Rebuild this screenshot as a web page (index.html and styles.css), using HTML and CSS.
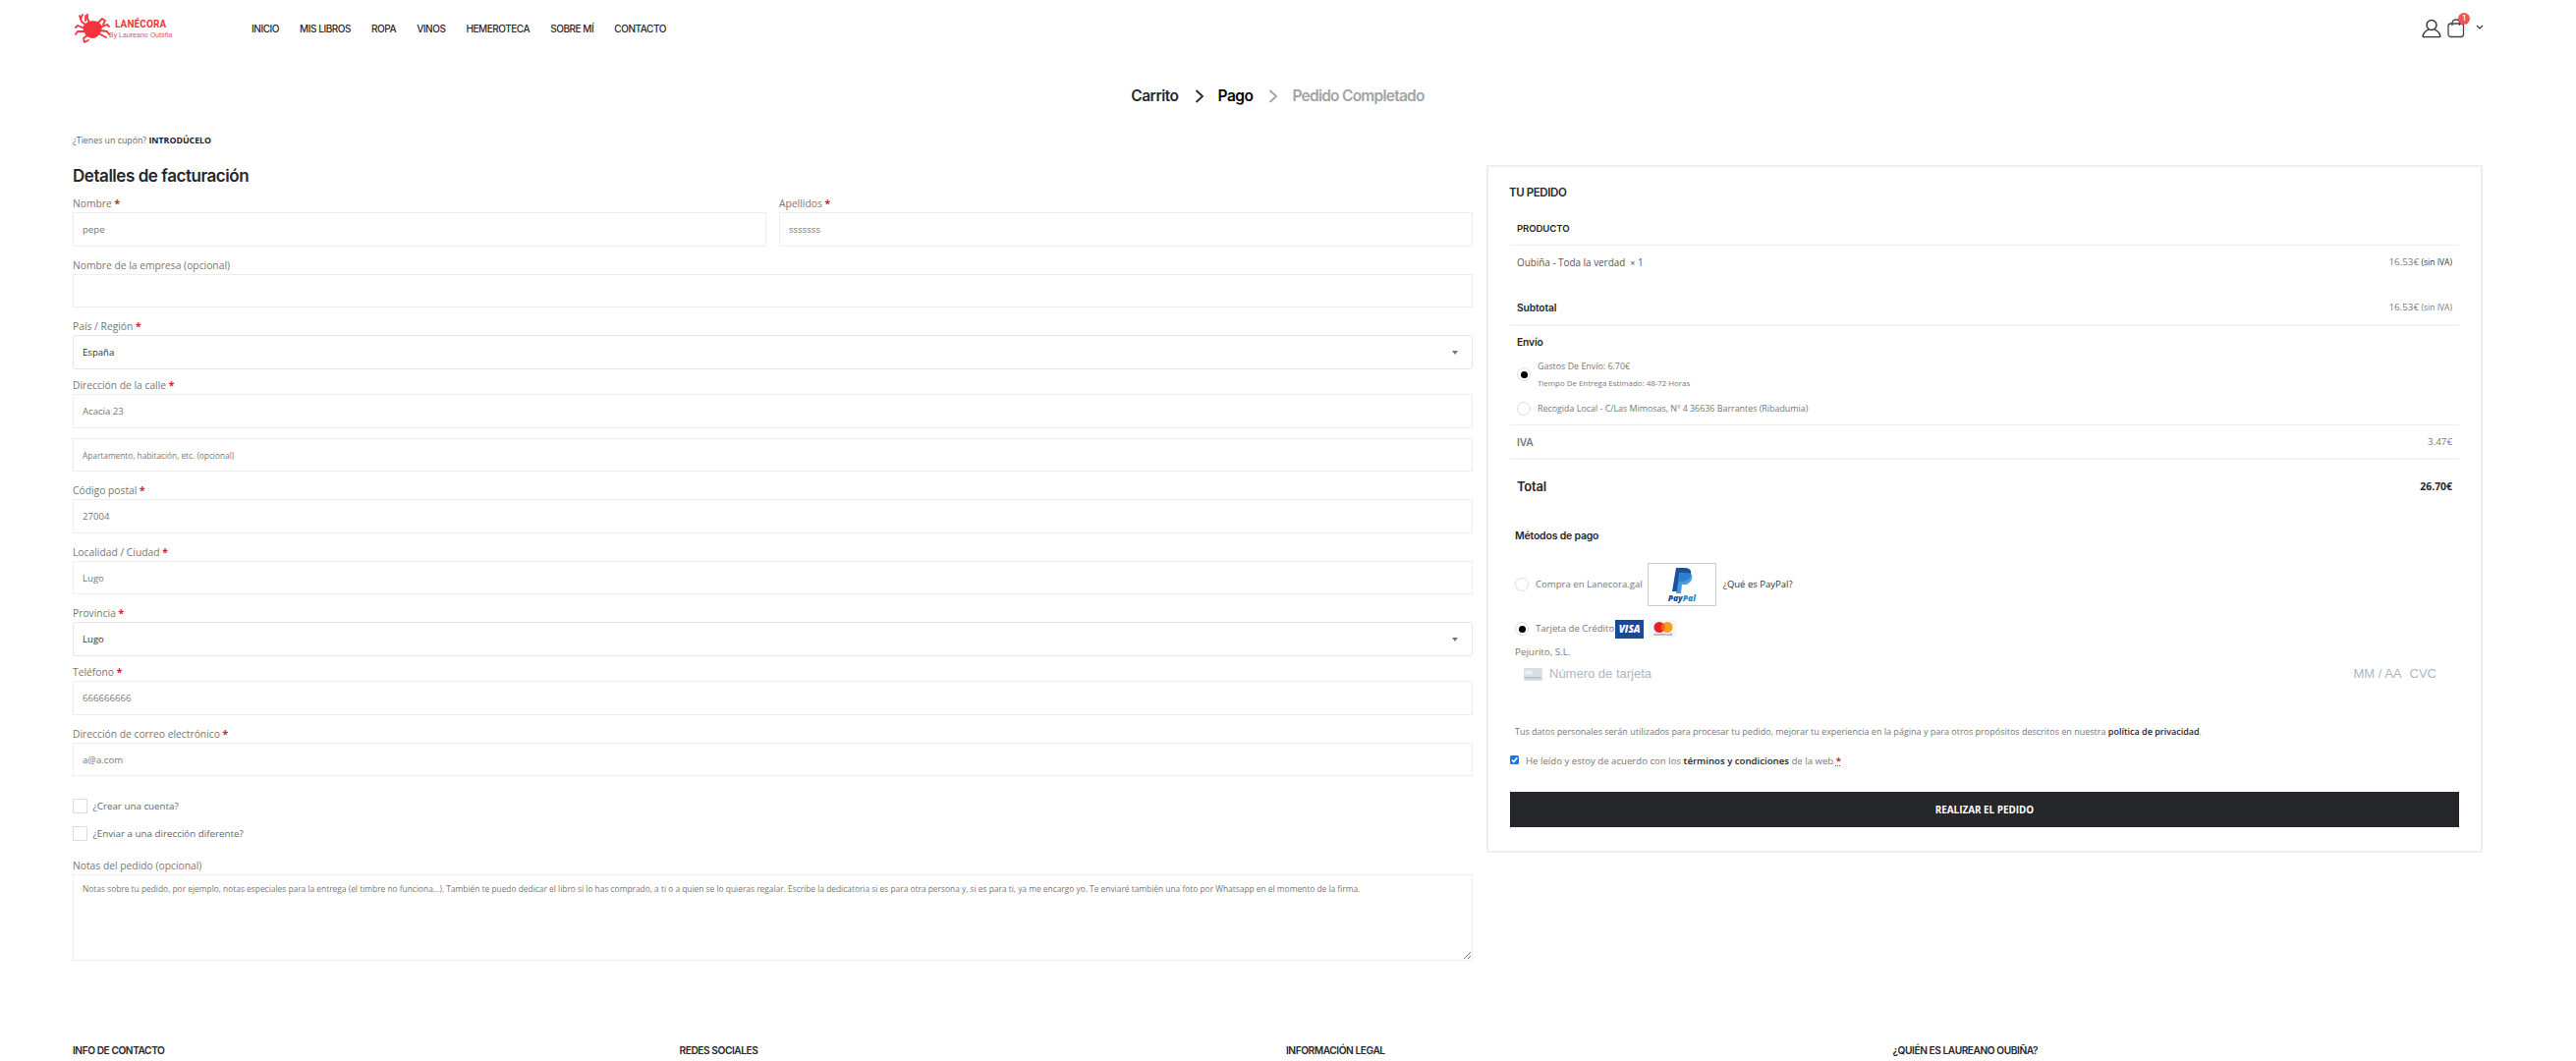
FILE: index.html
```html
<!DOCTYPE html>
<html lang="es">
<head>
<meta charset="utf-8">
<title>Finalizar compra - Lanécora</title>
<link rel="stylesheet" href="styles.css">
</head>
<body>
<div class="page">
  <header class="header">
    <a class="logo">
      <svg class="crab" width="36" height="30" viewBox="0 0 36 30" aria-hidden="true">
        <g fill="none" stroke="#f5333f" stroke-width="1.8" stroke-linecap="round" stroke-linejoin="round">
          <path d="M11 11 L7 8 L5 2"/><path d="M15 9 L13 5 L13 0"/>
          <path d="M8 1 L6 5"/><path d="M11 2 L11 7"/>
          <path d="M23 10 L28 5 L31 7 L29 11"/>
          <path d="M10 15 L3 12 L1 14"/><path d="M10 18 L3 18 L1 21"/>
          <path d="M26 14 L33 11 L35 13"/><path d="M26 17 L33 18 L35 21"/>
          <path d="M24 20 L30 23 L32 24"/>
          <path d="M13 22 L9 25 L10 29 L14 27"/>
        </g>
        <path d="M8.500 13 C12 6 24 5 27.500 12 C28.500 18 24 25 18 25 C13 25 8.500 20 8.500 13 Z" fill="#f5333f"/>
      </svg>
      <span class="logo-text"><span class="logo-name">LANÉCORA</span><span class="logo-sub">By Laureano Oubiña</span></span>
    </a>
    <nav class="nav">
      <a>INICIO</a><a>MIS LIBROS</a><a>ROPA</a><a>VINOS</a><a>HEMEROTECA</a><a>SOBRE MÍ</a><a>CONTACTO</a>
    </nav>
    <div class="tools">
      <svg width="20" height="20" viewBox="0 0 20 20" aria-hidden="true" fill="none" stroke="#333" stroke-width="1.4">
        <circle cx="10" cy="6.500" r="5"/><path d="M1 18.600 C1.600 14.500 4.500 12 7 11.200 M19 18.600 C18.400 14.500 15.500 12 13 11.200 M1 18.600 H19"/>
      </svg>
      <span class="bag">
        <svg width="18" height="20" viewBox="0 0 18 20" aria-hidden="true" fill="none" stroke="#444" stroke-width="1.3">
          <rect x="1" y="5" width="15.500" height="13.500" rx="2.500"/><path d="M5 7 V4.500 C5 2 7 1 9 1 C11 1 12.500 2 12.500 4.500 V7"/>
        </svg>
        <span class="badge">1</span>
      </span>
      <svg class="caret" width="8" height="6" viewBox="0 0 8 6" aria-hidden="true" fill="none" stroke="#333" stroke-width="1.2"><path d="M1 1 L4 4 L7 1"/></svg>
    </div>
  </header>

  <div class="steps">
    <span class="step">Carrito</span>
    <svg class="step-arrow" width="10" height="14" viewBox="0 0 10 14" aria-hidden="true" fill="none" stroke="#26272b" stroke-width="1.8"><path d="M1.500 1 L8 7 L1.500 13"/></svg>
    <span class="step step-now">Pago</span>
    <svg class="step-arrow" width="10" height="14" viewBox="0 0 10 14" aria-hidden="true" fill="none" stroke="#a3a3a3" stroke-width="1.8"><path d="M1.500 1 L8 7 L1.500 13"/></svg>
    <span class="step step-off">Pedido Completado</span>
  </div>

  <p class="coupon">¿Tienes un cupón? <b>INTRODÚCELO</b></p>

  <main class="checkout">
    <section class="billing">
      <h2 class="billing-title">Detalles de facturación</h2>
      <div class="two">
        <div class="field"><label class="label">Nombre <i>*</i></label><div class="input">pepe</div></div>
        <div class="field"><label class="label">Apellidos <i>*</i></label><div class="input">sssssss</div></div>
      </div>
      <div class="field"><label class="label">Nombre de la empresa (opcional)</label><div class="input"></div></div>
      <div class="field field-sel"><label class="label">País / Región <i>*</i></label><div class="input select">España</div></div>
      <div class="field"><label class="label">Dirección de la calle <i>*</i></label><div class="input">Acacia 23</div></div>
      <div class="field"><div class="input input-ph">Apartamento, habitación, etc. (opcional)</div></div>
      <div class="field"><label class="label">Código postal <i>*</i></label><div class="input">27004</div></div>
      <div class="field"><label class="label">Localidad / Ciudad <i>*</i></label><div class="input">Lugo</div></div>
      <div class="field field-sel"><label class="label">Provincia <i>*</i></label><div class="input select">Lugo</div></div>
      <div class="field"><label class="label">Teléfono <i>*</i></label><div class="input">666666666</div></div>
      <div class="field"><label class="label">Dirección de correo electrónico <i>*</i></label><div class="input">a@a.com</div></div>
      <div class="check-row check-first"><span class="box"></span>¿Crear una cuenta?</div>
      <div class="check-row"><span class="box"></span>¿Enviar a una dirección diferente?</div>
      <label class="label notes-label">Notas del pedido (opcional)</label>
      <div class="textarea">Notas sobre tu pedido, por ejemplo, notas especiales para la entrega (el timbre no funciona...). También te puedo dedicar el libro si lo has comprado, a ti o a quien se lo quieras regalar. Escribe la dedicatoria si es para otra persona y, si es para ti, ya me encargo yo. Te enviaré también una foto por Whatsapp en el momento de la firma.
        <svg class="grip" width="8" height="8" viewBox="0 0 8 8" aria-hidden="true" stroke="#777" stroke-width="1"><path d="M1 8 L8 1 M5 8 L8 5"/></svg>
      </div>
    </section>

    <aside class="order">
      <h3 class="order-title">TU PEDIDO</h3>
      <div class="row row-head">PRODUCTO</div>
      <div class="row row-item">
        <span class="item-name">Oubiña - Toda la verdad &nbsp;<small>×</small> 1</span>
        <span class="price">16.53€ <small class="tax tax-dark">(sin IVA)</small></span>
      </div>
      <div class="row row-sub">
        <b class="strong">Subtotal</b>
        <span class="price">16.53€ <small class="tax">(sin IVA)</small></span>
      </div>
      <div class="ship">
        <b class="strong">Envío</b>
        <div class="ship-opt ship-opt-1">
          <span class="radio radio-on"></span>
          <div><div class="ship-name">Gastos De Envío: 6.70€</div><div class="ship-note">Tiempo De Entrega Estimado: 48-72 Horas</div></div>
        </div>
        <div class="ship-opt ship-opt-2">
          <span class="radio"></span>
          <div class="ship-name">Recogida Local - C/Las Mimosas, Nº 4 36636 Barrantes (Ribadumia)</div>
        </div>
      </div>
      <div class="row row-tax"><b class="strong strong-grey">IVA</b><span class="price">3.47€</span></div>
      <div class="row row-total"><b class="total-label">Total</b><b class="total-value">26.70€</b></div>

      <div class="pay">
        <h4 class="pay-title">Métodos de pago</h4>
        <div class="pay-opt pay-opt-1">
          <span class="radio"></span>
          <span class="pay-name">Compra en Lanecora.gal</span>
          <span class="pp-box">
            <svg width="22" height="26" viewBox="0 0 22 26" aria-hidden="true">
              <path d="M5 0 H14 C19 0 21 3 20 7 C19 12 15 14 11 14 H8 L6.500 24 H1 Z" fill="#1d4f9c"/>
              <path d="M8 5 H16 C21 5 22 8 21 11 C20 15 17 17 13 17 H11 L10 26 H5 Z" fill="#2a8ad6" opacity=".85"/>
            </svg>
            <span class="pp-word">Pay<em>Pal</em></span>
          </span>
          <span class="pp-link">¿Qué es PayPal?</span>
        </div>
        <div class="pay-opt pay-opt-2">
          <span class="radio radio-on"></span>
          <span class="pay-name">Tarjeta de Crédito</span>
          <span class="visa">VISA</span>
          <span class="mc">
            <svg width="20" height="11" viewBox="0 0 20 11" aria-hidden="true"><circle cx="6" cy="5.500" r="5.500" fill="#e8202a"/><circle cx="14" cy="5.500" r="5.500" fill="#f59e1f"/><path d="M10 1.300 A5.500 5.500 0 0 1 10 9.700 A5.500 5.500 0 0 1 10 1.300 Z" fill="#f4641f"/></svg>
            <span class="mc-word">mastercard</span>
          </span>
        </div>
        <div class="pay-company">Pejurito, S.L.</div>
        <div class="card-line">
          <svg width="19" height="13" viewBox="0 0 19 13" aria-hidden="true"><rect width="19" height="13" rx="1.500" fill="#d9dee5"/><rect x="1.500" y="2.500" width="7" height="4" fill="#eef1f4"/><rect x="1.500" y="9" width="16" height="1.500" fill="#b3bcc7"/></svg>
          <span class="card-num">Número de tarjeta</span>
          <span class="card-date">MM / AA</span>
          <span class="card-cvc">CVC</span>
        </div>
        <p class="privacy">Tus datos personales serán utilizados para procesar tu pedido, mejorar tu experiencia en la página y para otros propósitos descritos en nuestra <b>política de privacidad</b>.</p>
      </div>
      <div class="terms"><span class="tick"><svg width="9" height="9" viewBox="0 0 9 9" aria-hidden="true" fill="none" stroke="#fff" stroke-width="1.600"><path d="M1.800 4.500 L3.800 6.500 L7.300 2.300"/></svg></span>He leído y estoy de acuerdo con los <b>términos y condiciones</b> de la web <i>*</i></div>
      <div class="place">REALIZAR EL PEDIDO</div>
    </aside>
  </main>

  <footer class="footer">
    <h5 class="foot-title">INFO DE CONTACTO</h5>
    <h5 class="foot-title">REDES SOCIALES</h5>
    <h5 class="foot-title">INFORMACIÓN LEGAL</h5>
    <h5 class="foot-title">¿QUIÉN ES LAUREANO OUBIÑA?</h5>
  </footer>
</div>
</body>
</html>
```
FILE: styles.css
```css
* { box-sizing: border-box; }
html, body { margin: 0; padding: 0; background: #fff; }
body { font-family: "Open Sans", "Liberation Sans", sans-serif; font-size: 10px; color: #777; }
h2, h3, h4, h5, p { margin: 0; font-weight: 600; }
.page { height: 1080px; overflow: hidden; padding: 0 95px 0 74px; }

.header { height: 58px; display: flex; align-items: center; }
.logo { display: flex; align-items: center; width: 182px; height: 30px; padding-left: 2px; }
.crab { flex: none; }
.logo-text { display: flex; flex-direction: column; margin-left: -1px; }
.logo-name { font: 700 10px/11px "Roboto", sans-serif; color: #f5333f; margin-left: 6px; letter-spacing: .1px; }
.logo-sub { font: 400 7px/9px "Liberation Sans", sans-serif; color: #e2505a; margin-top: 1px; }
.nav { display: flex; gap: 21px; font: 500 10px/16px "Inter", sans-serif; color: #26272b; letter-spacing: -.45px; }
.tools { margin-left: auto; display: flex; align-items: center; margin-right: -1px; }
.bag { position: relative; display: block; height: 20px; margin-left: 6px; }
.bag svg { display: block; }
.badge { position: absolute; left: 11px; top: -6px; width: 12px; height: 12px; border-radius: 50%; background: #f0555c; color: #fff; font: 600 7px/12px "Inter", sans-serif; text-align: center; }
.caret { margin-left: 11px; margin-top: -2px; }

.steps { display: flex; justify-content: center; align-items: center; height: 24px; margin-top: 28px; font: 600 15.500px/24px "Inter", sans-serif; letter-spacing: -.5px; color: #26272b; }
.step-now { color: #000; }
.step-off { color: #a3a3a3; letter-spacing: -.75px; }
.step-arrow { margin: 0 14px 0 16px; }

.coupon { margin-top: 25px; font: 400 8.800px/16px "Open Sans", sans-serif; color: #666; }
.coupon b { color: #222; font-weight: 700; }

.checkout { margin-top: 15px; display: grid; grid-template-columns: 1425px 1014px; column-gap: 14px; align-items: start; }
.billing-title { font: 600 17px/26px "Inter", sans-serif; letter-spacing: -.45px; color: #26272b; margin-bottom: 6px; }
.two { display: grid; grid-template-columns: 706px 706px; column-gap: 13px; }
.field { margin-bottom: 10px; }
.field-sel { margin-bottom: 7.500px; }
.label { display: block; font-size: 10.300px; line-height: 18px; color: #777; }
.label i, .terms i { color: #c9252d; font-style: normal; font-weight: 700; }
.input { height: 34.500px; border: 1px solid #eee; padding: 0 9px; font-size: 9.600px; line-height: 34px; color: #777; }
.input-ph { font-size: 8.300px; }
.select { color: #333; border-color: #e6e6e6; border-radius: 3px; position: relative; }
.select::after { content: ""; position: absolute; right: 14px; top: 15px; border: 3.500px solid transparent; border-top: 4px solid #777; border-bottom: 0; }
.check-row { display: flex; align-items: center; height: 15px; font-size: 9.800px; color: #666; margin-top: 13px; }
.check-first { margin-top: 23px; }
.box { width: 15px; height: 15px; border: 1px solid #ddd; margin-right: 5.500px; flex: none; }
.notes-label { margin-top: 16px; }
.textarea { position: relative; height: 88px; border: 1px solid #eee; padding: 6px 9px; font-size: 8.400px; line-height: 16px; color: #777; }
.grip { position: absolute; right: 1px; bottom: 1px; }

.order { margin-top: 2px; border: 2px solid #eee; padding: 16px 22px 24px; }
.order-title { font: 600 11.500px/20px "Inter", sans-serif; letter-spacing: -.4px; color: #26272b; margin-bottom: 9px; margin-left: -1px; }
.row { display: flex; justify-content: space-between; padding: 0 7px; }
.row-head { height: 35px; padding-top: 1px; border-bottom: 1px solid #eee; align-items: center; font: 600 9.600px/18px "Inter", sans-serif; letter-spacing: -.1px; color: #26272b; }
.row-item { height: 46px; padding-top: 8px; line-height: 18px; }
.item-name { color: #555; font-size: 9.900px; }
.item-name small { font-size: 9px; }
.price { font-size: 9.800px; color: #777; line-height: 18px; }
.tax { font-size: 8.500px; }
.tax-dark { color: #333; }
.row-sub { height: 36px; border-bottom: 2px solid #f3f3f3; align-items: center; }
.strong { font: 600 10.300px/18px "Inter", sans-serif; color: #26272b; letter-spacing: -.15px; }
.strong-grey { color: #777; }
.ship { padding: 7px; border-bottom: 1px solid #eee; }
.ship > .strong { display: block; }
.ship-opt { display: flex; align-items: center; gap: 7px; }
.ship-opt-1 { margin-top: 7px; }
.ship-opt-2 { margin-top: 9px; }
.radio { width: 14px; height: 14px; border-radius: 50%; border: 1px solid #ddd; background: #fff; position: relative; flex: none; }
.radio-on::after { content: ""; position: absolute; left: 2.500px; top: 2.500px; width: 7px; height: 7px; background: #000; border-radius: 50%; }
.ship-name { font-size: 8.900px; line-height: 18px; color: #777; }
.ship-note { font-size: 7.900px; line-height: 16px; color: #777; }
.row-tax { height: 35px; border-bottom: 2px solid #f3f3f3; align-items: center; }
.row-total { height: 54px; align-items: center; }
.total-label { font: 600 13px/18px "Inter", sans-serif; color: #26272b; letter-spacing: -.2px; }
.total-value { font-size: 10.400px; font-weight: 700; color: #26272b; }

.pay { padding: 15px 0 0 5px; }
.pay-title { font: 600 10.500px/18px "Inter", sans-serif; color: #26272b; letter-spacing: -.2px; }
.pay-opt { display: flex; align-items: center; }
.pay-opt-1 { margin-top: 18px; height: 44px; }
.pay-opt-2 { margin-top: 13px; height: 20px; }
.pay-name { margin: 0 0 2px 7px; font-size: 9.600px; color: #777; }
.pp-box { margin-left: 5px; width: 70px; height: 44px; border: 1px solid #ccc; display: flex; flex-direction: column; align-items: center; padding-top: 4px; }
.pp-box svg { flex: none; }
.pp-word { font: italic 800 8.500px/9px "Open Sans", sans-serif; color: #1d4f9c; }
.pp-word em { color: #2a8ad6; }
.pp-link { margin: 0 0 1px 7px; font-size: 9.500px; color: #333; }
.visa { margin-left: 1px; width: 29px; height: 19px; background: #1a4a96; color: #fff; font: italic 800 10px/19px "Open Sans", sans-serif; text-align: center; }
.mc { margin-left: 5px; width: 29px; height: 18px; background: #f6f6f6; display: flex; flex-direction: column; align-items: center; padding-top: 2px; }
.mc-word { font-size: 3.500px; line-height: 4px; color: #444; }
.pay-company { margin-top: 5px; line-height: 18px; font-size: 9.800px; color: #777; }
.card-line { margin-top: 3px; height: 20px; display: flex; align-items: center; padding: 0 23px 0 9px; font: 400 13px/20px "Liberation Sans", sans-serif; color: #aab7c4; }
.card-num { margin-left: 7px; }
.card-date { margin-left: auto; }
.card-cvc { margin-left: 8px; }
.privacy { margin-top: 41px; font: 400 9px/16px "Open Sans", sans-serif; color: #777; }
.privacy b { color: #26272b; font-weight: 600; }
.terms { margin-top: 12px; display: flex; align-items: center; white-space: pre-wrap; height: 18px; font-size: 9.650px; color: #777; }
.terms b { color: #222; font-weight: 600; }
.terms i { text-decoration: underline dotted; }
.tick { width: 9px; height: 9px; border-radius: 1.500px; background: #1976e6; margin-right: 7px; margin-top: -1px; flex: none; }
.tick svg { display: block; }
.place { margin-top: 23px; height: 36px; background: #26272b; color: #fff; font: 700 9.900px/36px "Open Sans", sans-serif; text-align: center; }

.footer { margin-top: 82px; display: grid; grid-template-columns: repeat(4, 617.500px); }
.foot-title { font: 600 10.200px/18px "Inter", sans-serif; color: #26272b; letter-spacing: -.45px; }
```
